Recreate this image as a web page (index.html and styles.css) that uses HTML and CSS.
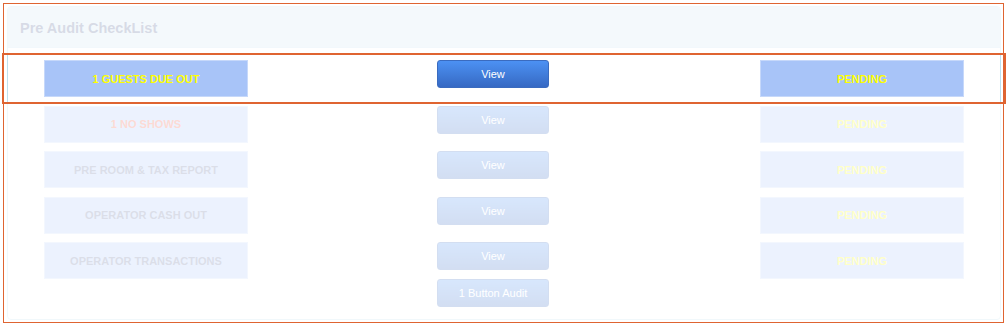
FILE: index.html
```html
<!DOCTYPE html>
<html lang="en">
<head>
<meta charset="utf-8">
<title>Pre Audit CheckList</title>
<link rel="stylesheet" href="styles.css">
</head>
<body>
<div class="frame">
  <div class="panel">
    <div class="panel-heading">
      <h3 class="panel-title">Pre Audit CheckList</h3>
    </div>
    <div class="panel-body">
      <div class="checklist">
        <div class="cell task task-due">1 GUESTS DUE OUT</div>
        <div class="action"><button class="btn">View</button></div>
        <div class="cell state">PENDING</div>

        <div class="cell task task-alert">1 NO SHOWS</div>
        <div class="action"><button class="btn">View</button></div>
        <div class="cell state">PENDING</div>

        <div class="cell task">PRE ROOM &amp; TAX REPORT</div>
        <div class="action"><button class="btn">View</button></div>
        <div class="cell state">PENDING</div>

        <div class="cell task">OPERATOR CASH OUT</div>
        <div class="action"><button class="btn">View</button></div>
        <div class="cell state">PENDING</div>

        <div class="cell task">OPERATOR TRANSACTIONS</div>
        <div class="action">
          <button class="btn">View</button>
          <button class="btn">1 Button Audit</button>
        </div>
        <div class="cell state">PENDING</div>
      </div>
    </div>
  </div>
</div>
<div class="spotlight"></div>
</body>
</html>
```
FILE: styles.css
```css
html, body {
  margin: 0;
  padding: 0;
  background: #ffffff;
}

body {
  position: relative;
  width: 1008px;
  height: 328px;
  overflow: hidden;
  font-family: "Liberation Sans", Arial, Helvetica, sans-serif;
}

.frame {
  position: relative;
  box-sizing: border-box;
  width: 1001px;
  height: 320px;
  margin: 3px 0 0 3px;
  padding: 3px 3px 3px 4px;
  display: flex;
  flex-direction: column;
}

.frame::after {
  content: "";
  position: absolute;
  inset: 0;
  border: 1px solid #df6431;
  z-index: 5;
  pointer-events: none;
}

.panel {
  flex: 1;
  border: 1px solid #bfe0ee;
  border-radius: 4px;
  background: #ffffff;
  display: flex;
  flex-direction: column;
  overflow: hidden;
}

.panel-heading {
  height: 41px;
  background: #cbe1f2;
  border-bottom: 1px solid #c4def0;
  display: flex;
  align-items: center;
  padding-left: 12px;
  padding-top: 1px;
  box-sizing: border-box;
}

.panel-title {
  margin: 0;
  font-size: 14.5px;
  font-weight: bold;
  color: #4a5c8c;
}

.panel-body {
  padding: 12px 36px 12px 36px;
}

.checklist {
  display: grid;
  grid-template-columns: 204px 1fr 204px;
  row-gap: 8.5px;
  align-items: start;
}

.cell {
  box-sizing: border-box;
  height: 37px;
  background: #a8c4f8;
  border: 1px solid #c6d8fa;
  display: flex;
  align-items: center;
  justify-content: center;
  font-size: 11px;
  font-weight: bold;
  text-transform: uppercase;
}

.task {
  color: #5c6a98;
}

.task-due {
  color: #ffff00;
}

.task-alert {
  color: #f2573c;
}

.state {
  color: #ffff00;
}

.action {
  display: flex;
  flex-direction: column;
  align-items: center;
  gap: 9px;
  padding-right: 22px;
}

.btn {
  box-sizing: border-box;
  width: 112px;
  height: 28px;
  margin: 0;
  padding: 0;
  border: 1px solid #3a6bbf;
  border-radius: 3px;
  background: linear-gradient(#4c91f3, #3669c3);
  color: #ffffff;
  font-family: "Liberation Sans", Arial, Helvetica, sans-serif;
  font-size: 11px;
}

.spotlight {
  position: absolute;
  left: 2px;
  top: 53px;
  width: 1004px;
  height: 51px;
  box-sizing: border-box;
  border: 2px solid #df6431;
  box-shadow: 0 0 0 2000px rgba(255, 255, 255, 0.78);
  z-index: 4;
  pointer-events: none;
}
```
